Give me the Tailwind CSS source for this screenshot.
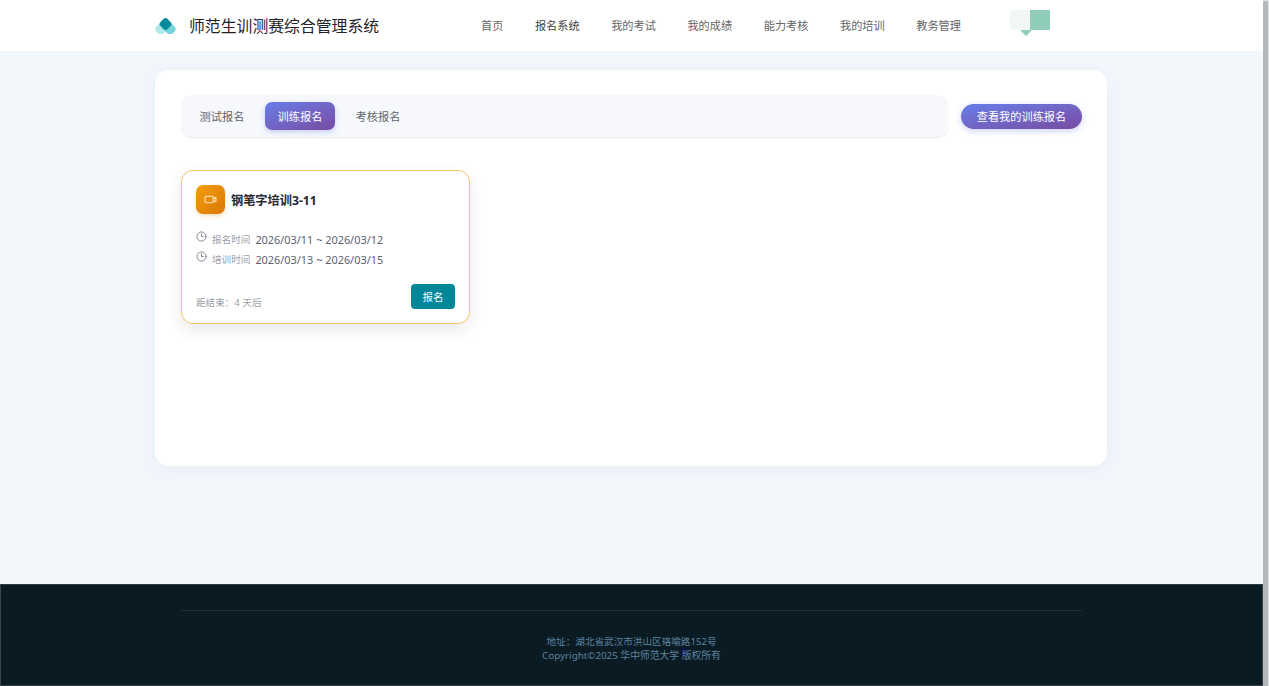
<!DOCTYPE html>
<html lang="zh-CN">
<head>
<meta charset="utf-8">
<title>师范生训测赛综合管理系统</title>
<script src="https://cdn.jsdelivr.net/npm/@tailwindcss/browser@4"></script>
</head>
<body class="h-[686px] overflow-hidden bg-white font-['Noto_Sans','Noto_Sans_CJK_SC',sans-serif]">
<div class="flex h-[686px]">
  <div class="flex w-[1263px] flex-col bg-[#f2f7fc]">
    <header class="flex h-[51px] items-center bg-white pl-[155px]">
      <svg class="h-[16px] w-[21px]" viewBox="0 0 21 16">
        <rect x="1" y="6" width="10" height="10" rx="3.5" transform="rotate(45 6 11)" fill="#aee8ea"/>
        <rect x="10" y="6" width="10" height="10" rx="3.5" transform="rotate(45 15 11)" fill="#74d2d8"/>
        <rect x="5.5" y="1" width="10" height="10" rx="3" transform="rotate(45 10.5 6)" fill="#068a9c"/>
      </svg>
      <div class="ml-[13px] w-[190px] whitespace-nowrap text-[15.85px] leading-[24px] text-[#1f2328]">师范生训测赛综合管理系统</div>
      <nav class="ml-[102px] flex gap-[31.5px] text-[11.2px] leading-[16px] text-[#666]">
        <a>首页</a>
        <a class="text-[#444]">报名系统</a>
        <a>我的考试</a>
        <a>我的成绩</a>
        <a>能力考核</a>
        <a>我的培训</a>
        <a>教务管理</a>
      </nav>
      <div class="relative mb-[11px] ml-[48.7px] flex">
        <div class="absolute left-[12px] top-[16px] h-[8px] w-[8px] rotate-45 rounded-[1px] bg-[#8fcdb6] shadow-[1px_1px_0_#d5f2ec]"></div>
        <div class="relative h-[20px] w-[20px] bg-[#f0f7f5]"></div>
        <div class="relative h-[20px] w-[20px] bg-[#8fcdb6]"></div>
      </div>
    </header>
    <main class="flex-1 pl-[155px] pt-[19px]">
      <section class="h-[396px] w-[952px] rounded-[14px] bg-white pl-[26px] pr-[25px] pt-[25px] shadow-[0_4px_20px_rgba(60,90,130,0.06)]">
        <div class="flex items-center">
          <div class="flex h-[42px] w-[767px] items-center gap-[8px] rounded-[10px] bg-[#f6f8fb] px-[6px] text-[11.2px] leading-[16px] text-[#5f6672] shadow-[0_1px_1px_rgba(0,0,0,0.08)]">
            <div class="flex h-[28px] w-[70px] items-center justify-center pt-[2px]">测试报名</div>
            <div class="flex h-[28px] w-[70px] items-center justify-center rounded-[7px] bg-gradient-to-br from-[#667eea] to-[#764ba2] pt-[2px] text-white shadow-[0_2px_5px_rgba(102,126,234,0.35)]">训练报名</div>
            <div class="flex h-[28px] w-[70px] items-center justify-center pt-[2px]">考核报名</div>
          </div>
          <button class="ml-[13px] flex h-[25px] w-[121px] items-center justify-center rounded-full bg-gradient-to-br from-[#667eea] to-[#764ba2] pt-[3px] text-[11.2px] text-white shadow-[0_2px_6px_rgba(102,126,234,0.35)]">查看我的训练报名</button>
        </div>
        <article class="mt-[33px] h-[154px] w-[289px] rounded-[12px] border border-[#f7c26b] bg-white px-[14px] pt-[14px] shadow-[0_6px_16px_rgba(0,0,0,0.09)]">
          <div class="flex items-center gap-[6px]">
            <div class="flex h-[29px] w-[29px] items-center justify-center rounded-[7px] bg-gradient-to-br from-[#f59e0b] to-[#d97706] shadow-[0_2px_4px_rgba(217,119,6,0.25)]">
              <svg class="h-[13px] w-[13px]" viewBox="0 0 24 24" fill="none" stroke="#fde7c0" stroke-width="2" stroke-linejoin="round"><rect x="2" y="6" width="15" height="12" rx="2"/><path d="M17 10l5-2v8l-5-2"/></svg>
            </div>
            <h3 class="pt-[2px] text-[12.2px] font-bold leading-[18px] text-[#262a33]">钢笔字培训3-11</h3>
          </div>
          <div class="mt-[16px] flex h-[20px] items-center text-[10.9px] text-[#5a6170]">
            <svg class="mb-[7px] h-[11px] w-[11px]" viewBox="0 0 24 24" fill="none" stroke="#7a808c" stroke-width="2" stroke-linecap="round"><circle cx="12" cy="12" r="10"/><path d="M12 6v6h4"/></svg>
            <span class="ml-[5px] text-[9.6px] text-[#9aa0aa]">报名时间</span>
            <span class="ml-[5px]">2026/03/11 ~ 2026/03/12</span>
          </div>
          <div class="flex h-[20px] items-center text-[10.9px] text-[#5a6170]">
            <svg class="mb-[7px] h-[11px] w-[11px]" viewBox="0 0 24 24" fill="none" stroke="#7a808c" stroke-width="2" stroke-linecap="round"><circle cx="12" cy="12" r="10"/><path d="M12 6v6h4"/></svg>
            <span class="ml-[5px] text-[9.6px] text-[#9aa0aa]">培训时间</span>
            <span class="ml-[5px]">2026/03/13 ~ 2026/03/15</span>
          </div>
          <div class="mt-[14px] flex items-start justify-between">
            <span class="mt-[11px] text-[9.6px] leading-[15px] text-[#9aa0aa]">距结束：4 天后</span>
            <button class="flex h-[25px] w-[44px] items-center justify-center rounded-[4px] bg-[#028798] pt-[2px] text-[10.5px] text-white">报名</button>
          </div>
        </article>
      </section>
    </main>
    <footer class="h-[102px] border border-[#3a444b] border-t-[#2e3a42] bg-[#0a1b23] pl-[180px] pr-[180px] pt-[25px]">
      <div class="h-px w-[901px] bg-[#1d2f3c]"></div>
      <div class="mt-[24px] w-[901px] text-center leading-[14px] text-[#5f84a0]">
        <p class="text-[9.6px]">地址：湖北省武汉市洪山区珞喻路152号</p>
        <p class="text-[9.8px]">Copyright©2025 华中师范大学 版权所有</p>
      </div>
    </footer>
  </div>
  <div class="w-[6px] bg-[#dfe2e3]">
    <div class="mt-[1px] h-[685px] w-[5px] rounded-t-[2px] bg-[#b4b8ba]"></div>
  </div>
</div>
</body>
</html>
